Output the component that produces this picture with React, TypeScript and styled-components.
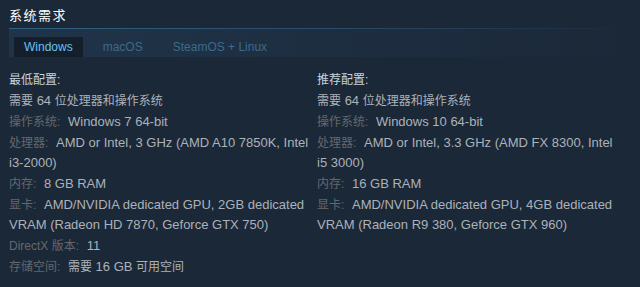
import styled, { createGlobalStyle } from "styled-components";
import { FC, ReactNode } from "react";

const COLORS = {
  bg: "#1b2838",
  title: "#ffffff",
  heading: "#c6d4df",
  value: "#acb2b8",
  label: "#62686e",
  tabActive: "#67c1f5",
  tabIdle: "#3d6a8c",
  tabActiveBg: "#151f2b",
};

const GlobalStyle = createGlobalStyle`
  body {
    margin: 0;
    background: ${COLORS.bg};
    font-family: "Liberation Sans", Arial, "Noto Sans CJK SC", sans-serif;
  }
`;

interface ISpec {
  label: string;
  value: ReactNode;
}

// CJK glyphs render a touch narrower than the latin text around them
const Zh = styled.span`
  font-size: 12px;
  line-height: 1;
`;

const MIN_SPECS: ISpec[] = [
  { label: "操作系统:", value: "Windows 7 64-bit" },
  { label: "处理器:", value: "AMD or Intel, 3 GHz (AMD A10 7850K, Intel i3-2000)" },
  { label: "内存:", value: "8 GB RAM" },
  { label: "显卡:", value: "AMD/NVIDIA dedicated GPU, 2GB dedicated VRAM (Radeon HD 7870, Geforce GTX 750)" },
  { label: "DirectX 版本:", value: "11" },
  {
    label: "存储空间:",
    value: (
      <>
        <Zh>需要</Zh> 16 GB <Zh>可用空间</Zh>
      </>
    ),
  },
];

const REC_SPECS: ISpec[] = [
  { label: "操作系统:", value: "Windows 10 64-bit" },
  { label: "处理器:", value: "AMD or Intel, 3.3 GHz (AMD FX 8300, Intel i5 3000)" },
  { label: "内存:", value: "16 GB RAM" },
  { label: "显卡:", value: "AMD/NVIDIA dedicated GPU, 4GB dedicated VRAM (Radeon R9 380, Geforce GTX 960)" },
];

const TABS = ["Windows", "macOS", "SteamOS + Linux"];

interface ColumnProps {
  heading: string;
  specs: ISpec[];
}
const SpecColumn: FC<ColumnProps> = ({ heading, specs }) => (
  <Column>
    <Heading>{heading}</Heading>
    <List>
      <Item>
        <Zh>需要</Zh> 64 <Zh>位处理器和操作系统</Zh>
      </Item>
      {specs.map(({ label, value }) => (
        <Item key={label}>
          <Label>{label}</Label> {value}
        </Item>
      ))}
    </List>
  </Column>
);

export default function App() {
  return (
    <>
      <GlobalStyle />
      <Page>
        <Title>系统需求</Title>
        <TabBar>
          {TABS.map((tab, idx) => (
            <Tab key={tab} active={idx === 0}>
              {tab}
            </Tab>
          ))}
        </TabBar>
        <Columns>
          <SpecColumn heading="最低配置:" specs={MIN_SPECS} />
          <SpecColumn heading="推荐配置:" specs={REC_SPECS} />
        </Columns>
      </Page>
    </>
  );
}

const Page = styled.div`
  padding: 6px 0 0 9px;
`;

const Title = styled.h2`
  margin: 0 0 2px;
  font-size: 13px;
  line-height: 20px;
  font-weight: normal;
  letter-spacing: 1.5px;
  color: ${COLORS.title};
`;

const TabBar = styled.div`
  display: flex;
  gap: 10px;
  padding: 9px 0 0 5px;
  background:
    linear-gradient(to right, #2f6183 0%, rgba(47, 97, 131, 0.5) 60%, rgba(47, 97, 131, 0) 100%) top / 100% 1px no-repeat,
    linear-gradient(to right, rgba(36, 62, 88, 0.55) 0%, rgba(36, 62, 88, 0) 100%);
`;

interface TabProps {
  active?: boolean;
}
const Tab = styled.div<TabProps>`
  height: 20px;
  padding: 0 10px;
  font-size: 12px;
  line-height: 20px;
  color: ${({ active }) => (active ? COLORS.tabActive : COLORS.tabIdle)};
  background: ${({ active }) => (active ? COLORS.tabActiveBg : "transparent")};
`;

const Columns = styled.div`
  display: grid;
  grid-template-columns: 301px 300px;
  column-gap: 7px;
  margin-top: 13px;
`;

const Column = styled.div`
  font-size: 13px;
  line-height: 20px;
  color: ${COLORS.value};
`;

const Heading = styled.div`
  font-size: 12px;
  color: ${COLORS.heading};
  margin-bottom: 1px;
`;

const List = styled.ul`
  list-style: none;
  margin: 0;
  padding: 0;
`;

const Item = styled.li`
  margin-bottom: 1px;
`;

const Label = styled.span`
  font-size: 12px;
  line-height: 1;
  color: ${COLORS.label};
  margin-right: 4px;
`;
